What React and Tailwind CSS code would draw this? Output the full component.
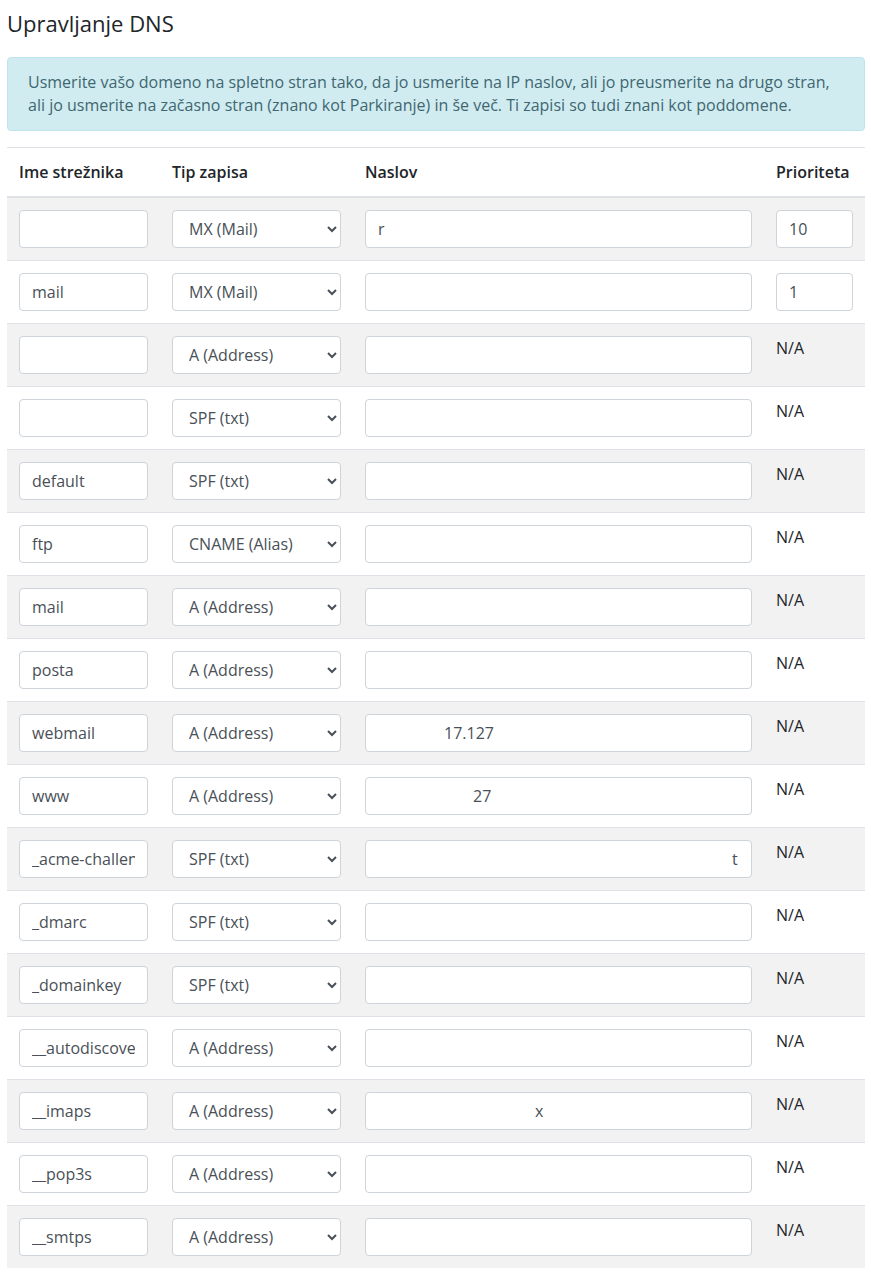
import React from "react";

const TYPES = ["A (Address)", "MX (Mail)", "SPF (txt)", "CNAME (Alias)"];

// naslov values are mostly blanked out in the source, only fragments remain
const records = [
  { host: "", type: "MX (Mail)", addr: "r", indent: "indent-0", prio: "10" },
  { host: "mail", type: "MX (Mail)", addr: "", indent: "indent-0", prio: "1" },
  { host: "", type: "A (Address)", addr: "", indent: "indent-0" },
  { host: "", type: "SPF (txt)", addr: "", indent: "indent-0" },
  { host: "default", type: "SPF (txt)", addr: "", indent: "indent-0" },
  { host: "ftp", type: "CNAME (Alias)", addr: "", indent: "indent-0" },
  { host: "mail", type: "A (Address)", addr: "", indent: "indent-0" },
  { host: "posta", type: "A (Address)", addr: "", indent: "indent-0" },
  { host: "webmail", type: "A (Address)", addr: "17.127", indent: "indent-[66px]" },
  { host: "www", type: "A (Address)", addr: "27", indent: "indent-[95px]" },
  { host: "_acme-challenge", type: "SPF (txt)", addr: "t", indent: "indent-[354px]" },
  { host: "_dmarc", type: "SPF (txt)", addr: "", indent: "indent-0" },
  { host: "_domainkey", type: "SPF (txt)", addr: "", indent: "indent-0" },
  { host: "__autodiscover", type: "A (Address)", addr: "", indent: "indent-0" },
  { host: "__imaps", type: "A (Address)", addr: "x", indent: "indent-[157px]" },
  { host: "__pop3s", type: "A (Address)", addr: "", indent: "indent-0" },
  { host: "__smtps", type: "A (Address)", addr: "", indent: "indent-0" },
];

const inputCls =
  "block w-full h-[38px] px-3 bg-white border border-[#ced4da] rounded-[4px] text-base text-[#495057] outline-none";

function Row({ rec, striped }) {
  return (
    <tr className={striped ? "bg-[#f2f2f2]" : ""}>
      <td className="p-3 align-top border-t border-[#dee2e6]">
        <input type="text" defaultValue={rec.host} className={inputCls} />
      </td>
      <td className="p-3 align-top border-t border-[#dee2e6]">
        <select defaultValue={rec.type} className={inputCls}>
          {TYPES.map((t) => (
            <option key={t}>{t}</option>
          ))}
        </select>
      </td>
      <td className="p-3 align-top border-t border-[#dee2e6]">
        <input
          type="text"
          defaultValue={rec.addr}
          className={inputCls + " " + rec.indent}
        />
      </td>
      <td className="p-3 align-top border-t border-[#dee2e6] text-base leading-6 text-[#212529]">
        {rec.prio ? (
          <input type="text" defaultValue={rec.prio} className={inputCls} />
        ) : (
          "N/A"
        )}
      </td>
    </tr>
  );
}

export default function App() {
  return (
    <div className="min-h-screen bg-white pl-[7px] pr-[6px] pt-[7px] font-['Open_Sans',sans-serif] text-[#212529]">
      {/* Title */}
      <h1 className="text-[22px] leading-8 font-normal mb-[18px]">Upravljanje DNS</h1>

      {/* Info */}
      <div className="bg-[#d1ecf1] border border-[#bee5eb] rounded-[4px] px-5 py-[13px] text-base leading-[23px] text-[#3f6770]">
        Usmerite vašo domeno na spletno stran tako, da jo usmerite na IP naslov, ali jo preusmerite na drugo stran,
        ali jo usmerite na začasno stran (znano kot Parkiranje) in še več. Ti zapisi so tudi znani kot poddomene.
      </div>

      {/* Records */}
      <table className="w-full mt-4 table-fixed border-collapse">
        <colgroup>
          <col className="w-[153px]" />
          <col className="w-[193px]" />
          <col />
          <col className="w-[101px]" />
        </colgroup>
        <thead>
          <tr className="text-left text-base leading-6">
            <th className="p-3 font-semibold border-t border-b-2 border-[#dee2e6]">Ime strežnika</th>
            <th className="p-3 font-semibold border-t border-b-2 border-[#dee2e6]">Tip zapisa</th>
            <th className="p-3 font-semibold border-t border-b-2 border-[#dee2e6]">Naslov</th>
            <th className="p-3 font-semibold border-t border-b-2 border-[#dee2e6]">Prioriteta</th>
          </tr>
        </thead>
        <tbody>
          {records.map((r, i) => (
            <Row key={i} rec={r} striped={i % 2 === 0} />
          ))}
        </tbody>
      </table>
    </div>
  );
}
